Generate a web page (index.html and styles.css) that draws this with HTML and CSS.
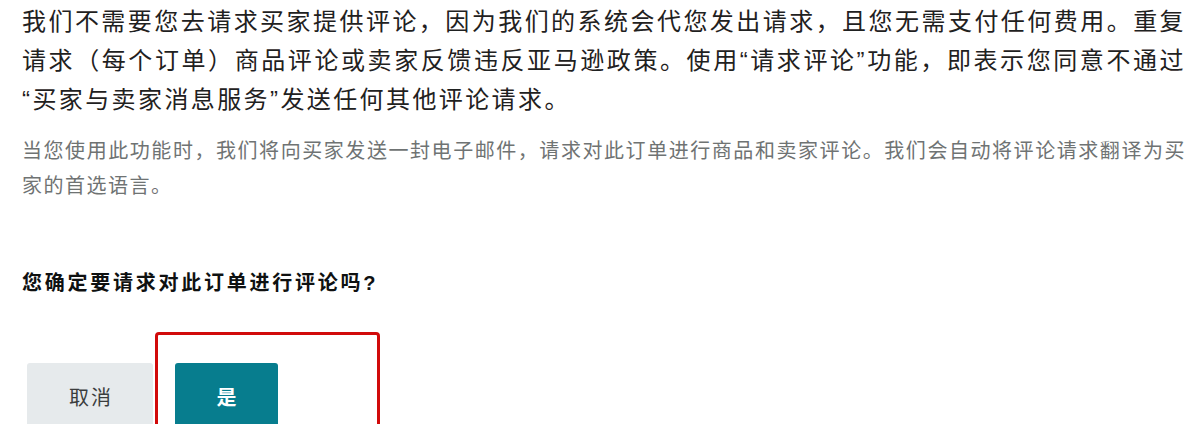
FILE: index.html
```html
<!DOCTYPE html>
<html lang="zh-CN">
<head>
<meta charset="utf-8">
<title>请求评论</title>
<link rel="stylesheet" href="styles.css">
</head>
<body>
<main class="page">
  <p class="lead">我们不需要您去请求买家提供评论，因为我们的系统会代您发出请求，且您无需支付任何费用。重复请求（每个订单）商品评论或卖家反馈违反亚马逊政策。使用“请求评论”功能，即表示您同意不通过“买家与卖家消息服务”发送任何其他评论请求。</p>
  <p class="note">当您使用此功能时，我们将向买家发送一封电子邮件，请求对此订单进行商品和卖家评论。我们会自动将评论请求翻译为买家的首选语言。</p>
  <p class="question">您确定要请求对此订单进行评论吗?</p>
  <div class="actions">
    <button class="btn btn-cancel" type="button">取消</button>
    <button class="btn btn-yes" type="button">是</button>
    <span class="highlight" aria-hidden="true"></span>
  </div>
</main>
</body>
</html>
```

FILE: styles.css
```css
html, body {
  margin: 0;
  padding: 0;
  background: #ffffff;
  overflow: hidden;
}

body {
  font-family: "Liberation Sans", "Noto Sans CJK SC", sans-serif;
  color: #1c1e1e;
}

.page {
  padding: 2px 14px 0 22px;
}

.lead {
  margin: 0;
  font-size: 24px;
  letter-spacing: 2.4px;
  line-height: 39px;
  text-align: justify;
  color: #1f2121;
}

.note {
  margin: 15px 0 0;
  font-size: 20px;
  letter-spacing: 1.5px;
  line-height: 35px;
  text-align: justify;
  color: #6f7373;
}

.question {
  margin: 65px 0 0;
  font-size: 20px;
  font-weight: 700;
  letter-spacing: 2.75px;
  line-height: 28px;
  color: #0f1111;
}

.actions {
  position: relative;
  display: flex;
  gap: 22px;
  margin-top: 66px;
  padding-left: 5px;
}

.btn {
  height: 66px;
  border: none;
  border-radius: 3px;
  font-family: inherit;
  font-size: 20px;
  letter-spacing: 2px;
  padding: 0 0 0 2px;
  cursor: pointer;
}

.btn-cancel {
  width: 126px;
  background: #e6eaec;
  color: #3a3d3d;
}

.btn-yes {
  width: 103px;
  background: #077d8e;
  color: #ffffff;
  font-weight: 700;
}

.highlight {
  position: absolute;
  left: 133px;
  top: -31px;
  width: 219px;
  height: 130px;
  border: 3px solid #d10a0a;
  border-radius: 4px;
  pointer-events: none;
}
```
